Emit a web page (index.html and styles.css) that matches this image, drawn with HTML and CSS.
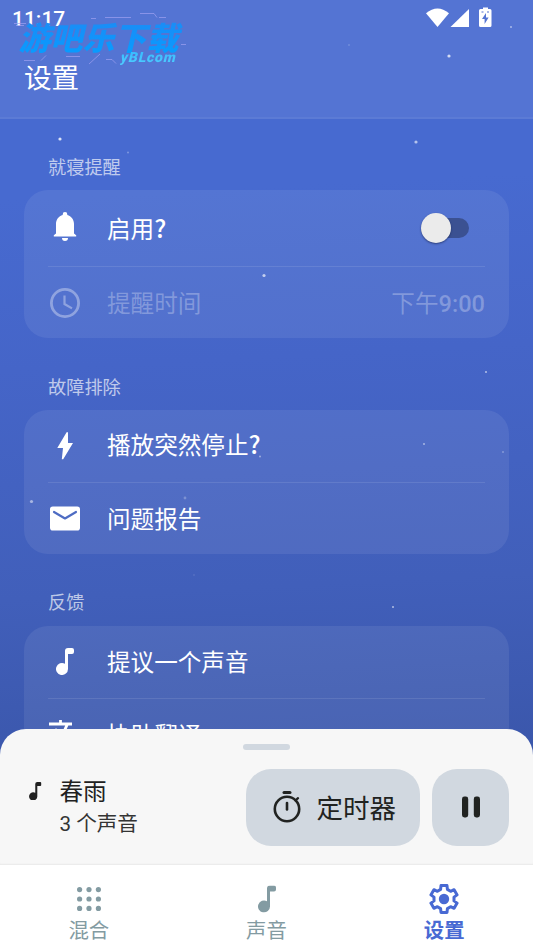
FILE: index.html
```html
<!DOCTYPE html>
<html lang="zh-CN">
<head>
<meta charset="utf-8">
<title>设置</title>
<link rel="stylesheet" href="styles.css">
</head>
<body>
<svg width="0" height="0" class="defs" aria-hidden="true">
  <symbol id="note" viewBox="0 0 18 27"><path d="M12 0h4a2 2 0 0 1 2 2v2a2 2 0 0 1-2 2h-4v15a6 6 0 1 1-3-5.200V3a3 3 0 0 1 3-3z"/></symbol>
</svg>
<div class="screen">
  <svg class="stars" viewBox="0 0 533 948" aria-hidden="true">
    <g fill="#fff">
      <circle cx="449" cy="56" r="1.600" opacity=".75"/><circle cx="511" cy="27" r="1" opacity=".5"/>
      <circle cx="349" cy="45" r=".8" opacity=".3"/><circle cx="60" cy="139" r="1.600" opacity=".8"/>
      <circle cx="128" cy="152.500" r="1" opacity=".3"/><circle cx="416" cy="142" r="1.600" opacity=".6"/>
      <circle cx="264" cy="275.500" r="1.600" opacity=".65"/><circle cx="486" cy="372" r="1" opacity=".6"/>
      <circle cx="424" cy="444" r="1" opacity=".5"/><circle cx="503" cy="452" r="1" opacity=".3"/>
      <circle cx="260" cy="456.500" r="1" opacity=".45"/><circle cx="31.500" cy="501.500" r="1.600" opacity=".5"/>
      <circle cx="185" cy="498" r="1.400" opacity=".25"/><circle cx="393" cy="607" r="1" opacity=".6"/>
      <circle cx="194" cy="575" r="1" opacity=".1"/>
    </g>
  </svg>

  <header class="header">
    <div class="status">
      <span class="clock">11:17</span>
      <svg class="status-icons" width="68" height="22" viewBox="0 0 68 22" fill="#fff">
        <path d="M1 7.200Q12.500-2.400 24 7.200L12.500 21z"/>
        <path d="M44 3v18H25.500z"/>
        <path fill-rule="evenodd" d="M58 1.500h5V3h2q1.500 0 1.500 1.500v15q0 1.500-1.500 1.500h-9.500q-1.500 0-1.500-1.500v-15Q54 3 55.500 3H58zM61 7l-4 6h2.600v5l4-6.500h-2.600z"/>
        <path d="M56.500 6h2M62 6h2" stroke="#5573d0"/>
      </svg>
    </div>
    <h1 class="title">设置</h1>
    <div class="watermark">
      <svg class="watermark-lines" width="166" height="56" viewBox="0 0 166 56" fill="none" stroke="#9d9ff0" stroke-width=".9">
        <path d="M-4 13.500h12M-2 15.500h8M87 7.500h26M73 8.500h5M122 3.500h14l3 4M141 7.500h7M6 50.500h11M23 50.500l5-5M48 46.500h14M71 54l11-10M88 49.500h6l4 4M163 34.500h5" opacity=".8"/>
      </svg>
      <span class="watermark-name">游吧乐下载</span>
      <span class="watermark-site">yBLcom</span>
    </div>
  </header>

  <main class="content">
    <h2 class="label">就寝提醒</h2>
    <section class="card">
      <div class="row tall">
        <svg class="icon" viewBox="0 0 30 30" fill="#fff"><path d="M15-1a2.300 2.300 0 0 1 2.300 2.400v.6c4 1 6.700 4.800 6.700 9v9.500l2.200 1.800v1.200H3.800v-1.200L6 20.500V11c0-4.200 2.700-8 6.700-9v-.6A2.300 2.300 0 0 1 15-1zM12 25h6a3 3 0 0 1-6 0z"/></svg>
        <span class="text">启用<span class="mark">?</span></span>
        <span class="switch"><span class="knob"></span></span>
      </div>
      <div class="row disabled">
        <svg class="icon" viewBox="0 0 30 30" fill="none" stroke="#fff"><circle cx="15" cy="15" r="13.600" stroke-width="2.800"/><path d="M14.500 7.500V16l7.500 4.400" stroke-width="2.200"/></svg>
        <span class="text">提醒时间</span>
        <span class="value">下午<span class="digits">9:00</span></span>
      </div>
    </section>

    <h2 class="label">故障排除</h2>
    <section class="card">
      <div class="row">
        <svg class="icon" viewBox="0 0 30 30" fill="#fff"><path d="M18 1.200V12h5L13.200 28.200h-1.400L13 17H7.300L16.600 1.200z"/></svg>
        <span class="text raised">播放突然停止<span class="mark">?</span></span>
      </div>
      <div class="row">
        <svg class="icon" viewBox="0 0 30 30"><rect y="2.500" width="30" height="24" rx="2.800" fill="#fff"/><path d="M4 8 15 14.500 26 8" fill="none" stroke="#4e6cc3" stroke-width="2.200" stroke-linecap="round" stroke-linejoin="round"/></svg>
        <span class="text">问题报告</span>
      </div>
    </section>

    <h2 class="label raised-label">反馈</h2>
    <section class="card">
      <div class="row">
        <svg class="icon" viewBox="0 0 30 30" fill="#fff"><use href="#note" x="6" y="1" width="18" height="27"/></svg>
        <span class="text">提议一个声音</span>
      </div>
      <div class="row">
        <svg class="icon" viewBox="0 0 30 30" fill="none" stroke="#fff" stroke-width="2.800"><path d="M-1 4h23M10.500 0v4M17 5C14 14 8 19 1 23M5 9c3 6 6 9 11 12M15 29l6-16 7 16M18 24h8"/></svg>
        <span class="text">协助翻译</span>
      </div>
    </section>
  </main>

  <section class="player">
    <div class="handle"></div>
    <div class="player-row">
      <svg class="small-note" fill="#212121"><use href="#note"/></svg>
      <div class="track">
        <div class="track-name">春雨</div>
        <div class="track-count">3 个声音</div>
      </div>
      <div class="button timer">
        <svg width="28" height="32" viewBox="0 0 28 32" fill="none" stroke="#212321"><circle cx="14" cy="18" r="12.200" stroke-width="2.600"/><path d="M11 1.500h6" stroke-width="3" stroke-linecap="round"/><path d="M14 12v6.500" stroke-width="2.600" stroke-linecap="round"/><path d="m22.500 9.500 2.500-2.300" stroke-width="2.300" stroke-linecap="round"/></svg>
        <span>定时器</span>
      </div>
      <div class="button pause">
        <svg width="18" height="22" viewBox="0 0 18 22" fill="#212321"><rect width="6.200" height="21" x="0" y=".5" rx="2.400"/><rect width="6.200" height="21" x="11.800" y=".5" rx="2.400"/></svg>
      </div>
    </div>
  </section>

  <nav class="nav">
    <div class="tab">
      <svg width="30" height="30" viewBox="0 0 30 30" fill="#839ba2"><circle cx="5.600" cy="5.600" r="2.600"/><circle cx="15" cy="5.600" r="2.600"/><circle cx="24.400" cy="5.600" r="2.600"/><circle cx="5.600" cy="15" r="2.600"/><circle cx="15" cy="15" r="2.600"/><circle cx="24.400" cy="15" r="2.600"/><circle cx="5.600" cy="24.400" r="2.600"/><circle cx="15" cy="24.400" r="2.600"/><circle cx="24.400" cy="24.400" r="2.600"/></svg>
      <span>混合</span>
    </div>
    <div class="tab">
      <svg width="30" height="30" viewBox="0 0 30 30" fill="#839ba2"><use href="#note" x="6" y="1.500" width="18" height="27"/></svg>
      <span>声音</span>
    </div>
    <div class="tab active">
      <svg width="30" height="30" viewBox="-15 -15 30 30"><path d="M-3-13.400H3L3.400-9.600 6.600-7.700 10.100-9.300 13.100-4.100 10-1.900V1.900L13.100 4.100 10.100 9.300 6.600 7.700 3.400 9.600 3 13.400H-3L-3.400 9.600-6.600 7.700-10.100 9.300-13.100 4.100-10 1.900V-1.900L-13.100-4.100-10.100-9.300-6.600-7.700-3.400-9.600z" fill="none" stroke="#4869d3" stroke-width="3" stroke-linejoin="round"/><circle r="5.200" fill="#4869d3"/></svg>
      <span>设置</span>
    </div>
  </nav>
</div>
</body>
</html>
```
FILE: styles.css
```css
* { box-sizing: border-box; }
body {
  margin: 0;
  font-family: Roboto, "Noto Sans CJK SC", sans-serif;
}
.defs { position: absolute; }
.screen {
  position: relative;
  width: 533px;
  height: 948px;
  overflow: hidden;
  display: flex;
  flex-direction: column;
  background: linear-gradient(177deg, #476ad0 0, #476ad0 200px, #4565c8 370px, #415fba 600px, #3a56aa 790px);
}
.stars { position: absolute; top: 0; left: 0; width: 533px; height: 948px; pointer-events: none; }
.header {
  position: relative;
  height: 119px;
  flex: none;
  background: rgba(255, 255, 255, .07);
  border-bottom: 2px solid rgba(255, 255, 255, .05);
}
.status {
  height: 36px;
  padding: 0 40px 0 12px;
  display: flex;
  align-items: center;
  justify-content: space-between;
}
.clock { color: #fff; font-size: 21px; line-height: 36px; font-weight: 500; padding-top: 2px; }
.status-icons { margin-bottom: 2px; }
.title {
  margin: 21px 0 0 24px;
  color: #fff;
  font-size: 27.600px;
  font-weight: 400;
  line-height: 44px;
}
.watermark { position: absolute; left: 18px; top: 10px; width: 166px; height: 56px; }
.watermark-lines { position: absolute; left: 0; top: 0; overflow: visible; }
.watermark-name, .watermark-site {
  position: absolute;
  white-space: nowrap;
  transform: skewX(-14deg);
  -webkit-background-clip: text;
  background-clip: text;
  color: transparent;
}
.watermark-name {
  left: 4px;
  top: 8px;
  font-family: "Noto Sans CJK SC", sans-serif;
  font-size: 32px;
  line-height: 36px;
  font-weight: 900;
  background-image: linear-gradient(#1d8af5, #079cff);
}
.watermark-site {
  left: 103px;
  top: 38px;
  font-size: 14px;
  line-height: 18px;
  letter-spacing: .8px;
  font-weight: 900;
  background-image: linear-gradient(#32b5ff, #50d0ff);
}
.content { height: 641px; flex: none; padding: 30px 24px 0; overflow: hidden; }
.label {
  margin: 0;
  padding: 1px 24px 0;
  height: 41px;
  color: rgba(255, 255, 255, .67);
  font-size: 18.200px;
  line-height: 36px;
  font-weight: 400;
}
.raised-label { padding-top: 0; }
.card {
  border-radius: 24px;
  padding: 0 24px;
  background: rgba(255, 255, 255, .075);
  margin-bottom: 31px;
}
.row { height: 72px; display: flex; align-items: center; }
.row.tall { height: 76px; }
.row + .row { border-top: 1.500px solid rgba(255, 255, 255, .1); }
.icon { width: 30px; height: 30px; margin: 0 27px 0 2px; flex: none; overflow: visible; }
.text {
  color: #fff;
  font-family: "Noto Sans CJK SC", sans-serif;
  font-size: 23.600px;
  line-height: 34px;
  padding-bottom: 2px;
  white-space: nowrap;
}
.tall .text { padding-bottom: 1px; }
.raised { padding-bottom: 5px; }
.mark { font-size: 24.500px; font-weight: 500; }
.switch {
  width: 48px;
  height: 20px;
  margin: 0 16px 0 auto;
  display: flex;
  align-items: center;
  border-radius: 10px;
  background: #3b5192;
}
.knob {
  width: 30px;
  height: 30px;
  border-radius: 50%;
  background: #ebebeb;
  box-shadow: 0 1px 2px rgba(20, 30, 70, .6);
}
.disabled .icon { opacity: .35; }
.disabled .text { color: rgba(255, 255, 255, .28); padding-bottom: 1px; }
.value { margin-left: auto; padding-bottom: 2px; color: rgba(255, 255, 255, .28); font-size: 23.600px; }
.digits { font-weight: 500; }
.player {
  height: 136px;
  flex: none;
  margin-top: -31px;
  position: relative;
  border-radius: 26px 26px 0 0;
  background: #f7f7f7;
  padding: 15px 24px 0;
  box-shadow: inset 0 -2px 2px -1px rgba(0, 0, 0, .06);
}
.handle { width: 47px; height: 6px; margin: 0 auto 19px; border-radius: 3px; background: #d1d8e0; }
.player-row { height: 77px; display: flex; gap: 12px; }
.small-note { width: 12.500px; height: 18.500px; margin: 12.500px 6px 0 5px; flex: none; }
.track { flex: 1; color: #212121; padding-top: 6px; }
.track-name { font-size: 23.600px; line-height: 35px; }
.track-count { font-size: 20.600px; line-height: 29px; color: #333; }
.button {
  height: 77px;
  border-radius: 25px;
  background: #d1d8e0;
  display: flex;
  align-items: center;
  justify-content: center;
}
.timer { width: 174.500px; gap: 16px; padding-left: 3px; color: #212321; font-size: 26.500px; }
.timer span { padding-bottom: 2px; }
.timer svg { margin-bottom: 2px; }
.pause { width: 77px; }
.pause svg { margin-bottom: 1px; }
.nav { height: 83px; flex: none; display: flex; background: #fff; }
.tab {
  flex: 1;
  padding-top: 19px;
  display: flex;
  flex-direction: column;
  align-items: center;
  color: #839ba2;
  font-size: 20.400px;
  line-height: 34px;
}
.tab svg { flex: none; }
.tab.active { color: #4869d3; font-weight: 700; }
```
